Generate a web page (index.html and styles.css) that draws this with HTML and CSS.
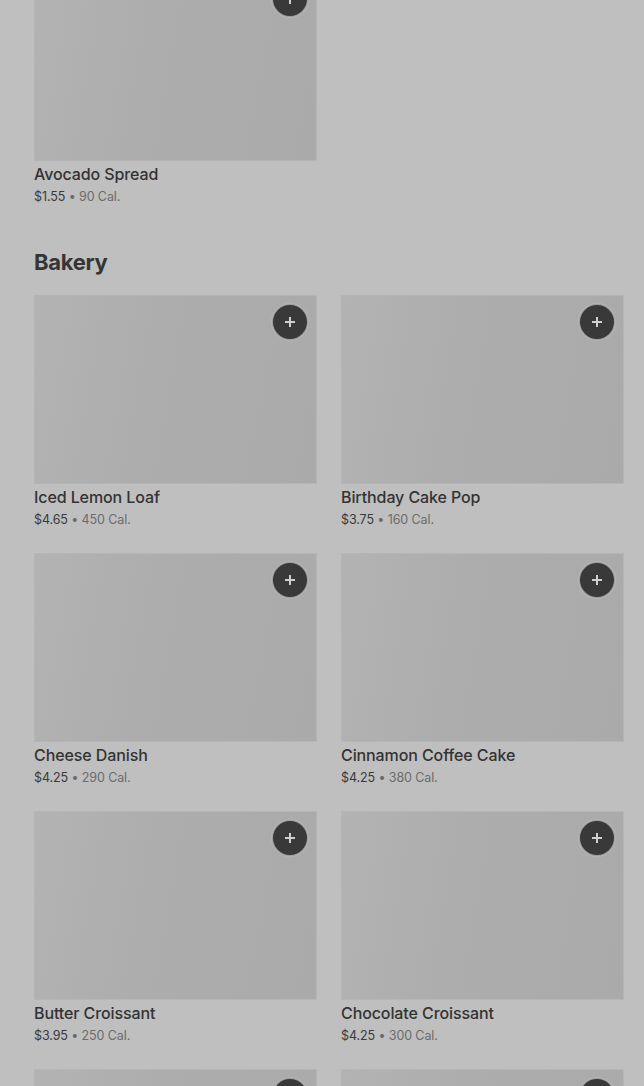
FILE: index.html
```html
<!DOCTYPE html>
<html lang="en">
<head>
<meta charset="utf-8">
<title>Menu</title>
<link rel="stylesheet" href="styles.css">
</head>
<body>
<main class="menu">
  <section class="section section-first">
    <div class="grid">
      <article class="card">
        <div class="thumb"><button class="add" aria-label="Add"><svg viewBox="0 0 12 12" width="12" height="12"><path d="M6 1v10M1 6h10" stroke="currentColor" stroke-width="2"/></svg></button></div>
        <h3 class="name">Avocado Spread</h3>
        <p class="meta"><span class="price">$1.55</span> • 90 Cal.</p>
      </article>
    </div>
  </section>

  <section class="section">
    <h2 class="heading">Bakery</h2>
    <div class="grid">
      <article class="card">
        <div class="thumb"><button class="add" aria-label="Add"><svg viewBox="0 0 12 12" width="12" height="12"><path d="M6 1v10M1 6h10" stroke="currentColor" stroke-width="2"/></svg></button></div>
        <h3 class="name">Iced Lemon Loaf</h3>
        <p class="meta"><span class="price">$4.65</span> • 450 Cal.</p>
      </article>
      <article class="card">
        <div class="thumb"><button class="add" aria-label="Add"><svg viewBox="0 0 12 12" width="12" height="12"><path d="M6 1v10M1 6h10" stroke="currentColor" stroke-width="2"/></svg></button></div>
        <h3 class="name">Birthday Cake Pop</h3>
        <p class="meta"><span class="price">$3.75</span> • 160 Cal.</p>
      </article>
      <article class="card">
        <div class="thumb"><button class="add" aria-label="Add"><svg viewBox="0 0 12 12" width="12" height="12"><path d="M6 1v10M1 6h10" stroke="currentColor" stroke-width="2"/></svg></button></div>
        <h3 class="name">Cheese Danish</h3>
        <p class="meta"><span class="price">$4.25</span> • 290 Cal.</p>
      </article>
      <article class="card">
        <div class="thumb"><button class="add" aria-label="Add"><svg viewBox="0 0 12 12" width="12" height="12"><path d="M6 1v10M1 6h10" stroke="currentColor" stroke-width="2"/></svg></button></div>
        <h3 class="name">Cinnamon Coffee Cake</h3>
        <p class="meta"><span class="price">$4.25</span> • 380 Cal.</p>
      </article>
      <article class="card">
        <div class="thumb"><button class="add" aria-label="Add"><svg viewBox="0 0 12 12" width="12" height="12"><path d="M6 1v10M1 6h10" stroke="currentColor" stroke-width="2"/></svg></button></div>
        <h3 class="name">Butter Croissant</h3>
        <p class="meta"><span class="price">$3.95</span> • 250 Cal.</p>
      </article>
      <article class="card">
        <div class="thumb"><button class="add" aria-label="Add"><svg viewBox="0 0 12 12" width="12" height="12"><path d="M6 1v10M1 6h10" stroke="currentColor" stroke-width="2"/></svg></button></div>
        <h3 class="name">Chocolate Croissant</h3>
        <p class="meta"><span class="price">$4.25</span> • 300 Cal.</p>
      </article>
      <article class="card">
        <div class="thumb"><button class="add" aria-label="Add"><svg viewBox="0 0 12 12" width="12" height="12"><path d="M6 1v10M1 6h10" stroke="currentColor" stroke-width="2"/></svg></button></div>
        <h3 class="name">Blueberry Muffin</h3>
        <p class="meta"><span class="price">$3.45</span> • 360 Cal.</p>
      </article>
      <article class="card">
        <div class="thumb"><button class="add" aria-label="Add"><svg viewBox="0 0 12 12" width="12" height="12"><path d="M6 1v10M1 6h10" stroke="currentColor" stroke-width="2"/></svg></button></div>
        <h3 class="name">Banana Nut Bread</h3>
        <p class="meta"><span class="price">$3.95</span> • 410 Cal.</p>
      </article>
    </div>
  </section>
</main>
</body>
</html>
```

FILE: styles.css
```css
html, body {
  margin: 0;
  padding: 0;
  background: #bfbfbf;
  overflow: hidden;
}

body {
  font-family: Inter, "Liberation Sans", sans-serif;
  color: #333333;
}

.menu {
  padding: 0 20px 0 34px;
  margin-top: -28px;
}

.section + .section {
  margin-top: 40px;
}

.heading {
  margin: 0 0 17px;
  font-size: 22px;
  line-height: 32px;
  font-weight: 700;
  letter-spacing: -0.3px;
  color: #353535;
}

.grid {
  display: grid;
  grid-template-columns: 283px 283px;
  column-gap: 24px;
  row-gap: 24px;
}

.card {
  display: flex;
  flex-direction: column;
}

.thumb {
  position: relative;
  height: 189px;
  background: linear-gradient(100deg, #b3b3b3 0%, #adadad 40%, #aaaaaa 100%);
  box-shadow: inset 0 0 0 1px #b5b5b5;
}

.add {
  position: absolute;
  top: 9px;
  right: 9px;
  width: 36px;
  height: 36px;
  padding: 0;
  border: 1px solid rgba(220, 220, 220, 0.6);
  border-radius: 50%;
  background: #393939;
  color: #cfcfcf;
  display: flex;
  align-items: center;
  justify-content: center;
  box-shadow: 0 0 2px rgba(255, 255, 255, 0.4);
}

.name {
  margin: 3px 0 0;
  font-size: 16px;
  line-height: 20px;
  font-weight: 500;
  letter-spacing: -0.1px;
  color: #333333;
}

.meta {
  margin: 4px 0 0;
  font-size: 12.5px;
  line-height: 18px;
  letter-spacing: -0.1px;
  color: #6b6b6b;
}

.price {
  color: #3a3a3a;
}
```
